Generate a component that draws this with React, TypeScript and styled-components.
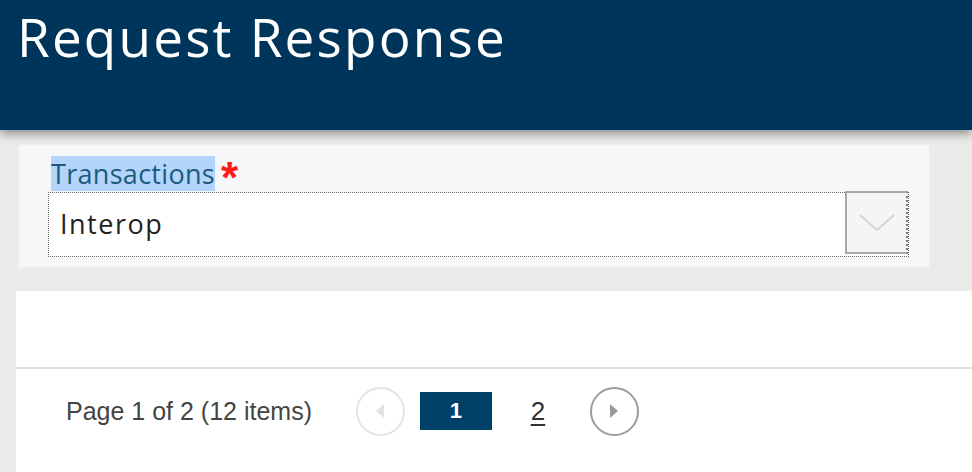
import React from "react";
import styled, { createGlobalStyle } from "styled-components";

const GlobalStyle = createGlobalStyle`
	html, body {
		margin: 0;
		padding: 0;
		background: #ecebe9;
		overflow: hidden;
	}
`;

const App: React.FC = () => {
	return (
		<>
			<GlobalStyle />
			<Header>
				<Title>Request Response</Title>
			</Header>
			<Content>
				<FormPanel>
					<LabelRow>
						<Label>Transactions</Label>
						<Required>*</Required>
					</LabelRow>
					<SelectBox>
						<SelectValue>Interop</SelectValue>
						<DropButton>
							<svg width="38" height="20" viewBox="0 0 38 20">
								<polyline
									points="2,2 19,17 36,2"
									fill="none"
									stroke="#d3d5d8"
									strokeWidth="2"
								/>
							</svg>
						</DropButton>
					</SelectBox>
				</FormPanel>
				<GridPanel>
					<EmptyRow />
					<Pager>
						<PagerInfo>Page 1 of 2 (12 items)</PagerInfo>
						<NavCircle disabled>
							<svg width="12" height="16" viewBox="0 0 12 16">
								<polygon points="10,1 2,8 10,15" fill="#e2e2e2" />
							</svg>
						</NavCircle>
						<PageButton active>1</PageButton>
						<PageButton>2</PageButton>
						<NavCircle>
							<svg width="12" height="16" viewBox="0 0 12 16">
								<polygon points="2,1 10,8 2,15" fill="#9a9a9a" />
							</svg>
						</NavCircle>
					</Pager>
				</GridPanel>
			</Content>
		</>
	);
};

// ================== styles ========================
const Header = styled.header`
	position: relative;
	z-index: 1;
	display: flow-root;
	height: 130px;
	background: #00355b;
	padding-left: 17px;
	box-shadow: 0 3px 10px rgba(0, 0, 0, 0.45);
`;

const Title = styled.h1`
	margin: 0;
	font-family: "Open Sans", sans-serif;
	font-weight: 400;
	font-size: 53px;
	line-height: normal;
	color: #ffffff;
	letter-spacing: 2.2px;
`;

const Content = styled.main`
	padding-left: 16px;
	padding-top: 14px;
`;

const FormPanel = styled.section`
	margin: 0 42px 0 2px;
	padding: 11px 20px 10px 29px;
	background: #f6f7f9;
	border: 1px solid #eceef1;
`;

const LabelRow = styled.div`
	display: flex;
	align-items: flex-start;
	margin-left: 3px;
	height: 36px;
`;

const Label = styled.span`
	font-family: "Open Sans", sans-serif;
	font-size: 27px;
	line-height: 35px;
	letter-spacing: 0.3px;
	color: #1d5a7c;
	background: #b3d4fb;
`;

const Required = styled.span`
	margin-left: 6px;
	font-family: "Liberation Sans", sans-serif;
	font-size: 44px;
	font-weight: 700;
	line-height: 44px;
	height: 36px;
	color: #ff1a1a;
`;

const SelectBox = styled.div`
	display: flex;
	align-items: flex-start;
	height: 63px;
	background: #ffffff;
	border: 1.5px dotted #666666;
`;

const SelectValue = styled.div`
	flex: 1;
	padding-left: 11px;
	font-family: "Open Sans", sans-serif;
	font-size: 27px;
	line-height: 62px;
	letter-spacing: 1.5px;
	color: #222222;
`;

const DropButton = styled.div`
	display: flex;
	align-items: center;
	justify-content: center;
	width: 59px;
	height: 59px;
	margin-top: -2px;
	background: #f4f5f7;
	border: 2px solid #a9a9a9;
	border-right-style: dotted;
	border-right-color: #777777;
`;

const GridPanel = styled.section`
	margin-top: 23px;
	background: #ffffff;
	height: 200px;
`;

const EmptyRow = styled.div`
	height: 76px;
	border-bottom: 2px solid #dedede;
`;

const Pager = styled.div`
	display: flex;
	align-items: center;
	height: 84px;
	padding-left: 50px;
`;

const PagerInfo = styled.span`
	font-family: "Liberation Sans", Arial, sans-serif;
	font-size: 25px;
	color: #444444;
	margin-right: 44px;
`;

const NavCircle = styled.button<{ disabled?: boolean }>`
	display: flex;
	align-items: center;
	justify-content: center;
	box-sizing: border-box;
	width: 49px;
	height: 49px;
	padding: 0;
	border-radius: 50%;
	background: #ffffff;
	border: 2.5px solid ${({ disabled }) => (disabled ? "#e4e4e4" : "#9d9d9d")};
	margin-right: 15px;
`;

const PageButton = styled.span<{ active?: boolean }>`
	display: flex;
	align-items: center;
	justify-content: center;
	font-family: "Liberation Sans", Arial, sans-serif;
	font-size: ${({ active }) => (active ? "22px" : "26px")};
	width: ${({ active }) => (active ? "72px" : "18px")};
	height: 38px;
	margin-right: ${({ active }) => (active ? "37px" : "43px")};
	background: ${({ active }) => (active ? "#00416a" : "transparent")};
	color: ${({ active }) => (active ? "#ffffff" : "#333333")};
	font-weight: ${({ active }) => (active ? 700 : 400)};
	text-decoration: ${({ active }) => (active ? "none" : "underline")};
	text-decoration-thickness: 2px;
	text-underline-offset: 4px;
`;

export default App;
